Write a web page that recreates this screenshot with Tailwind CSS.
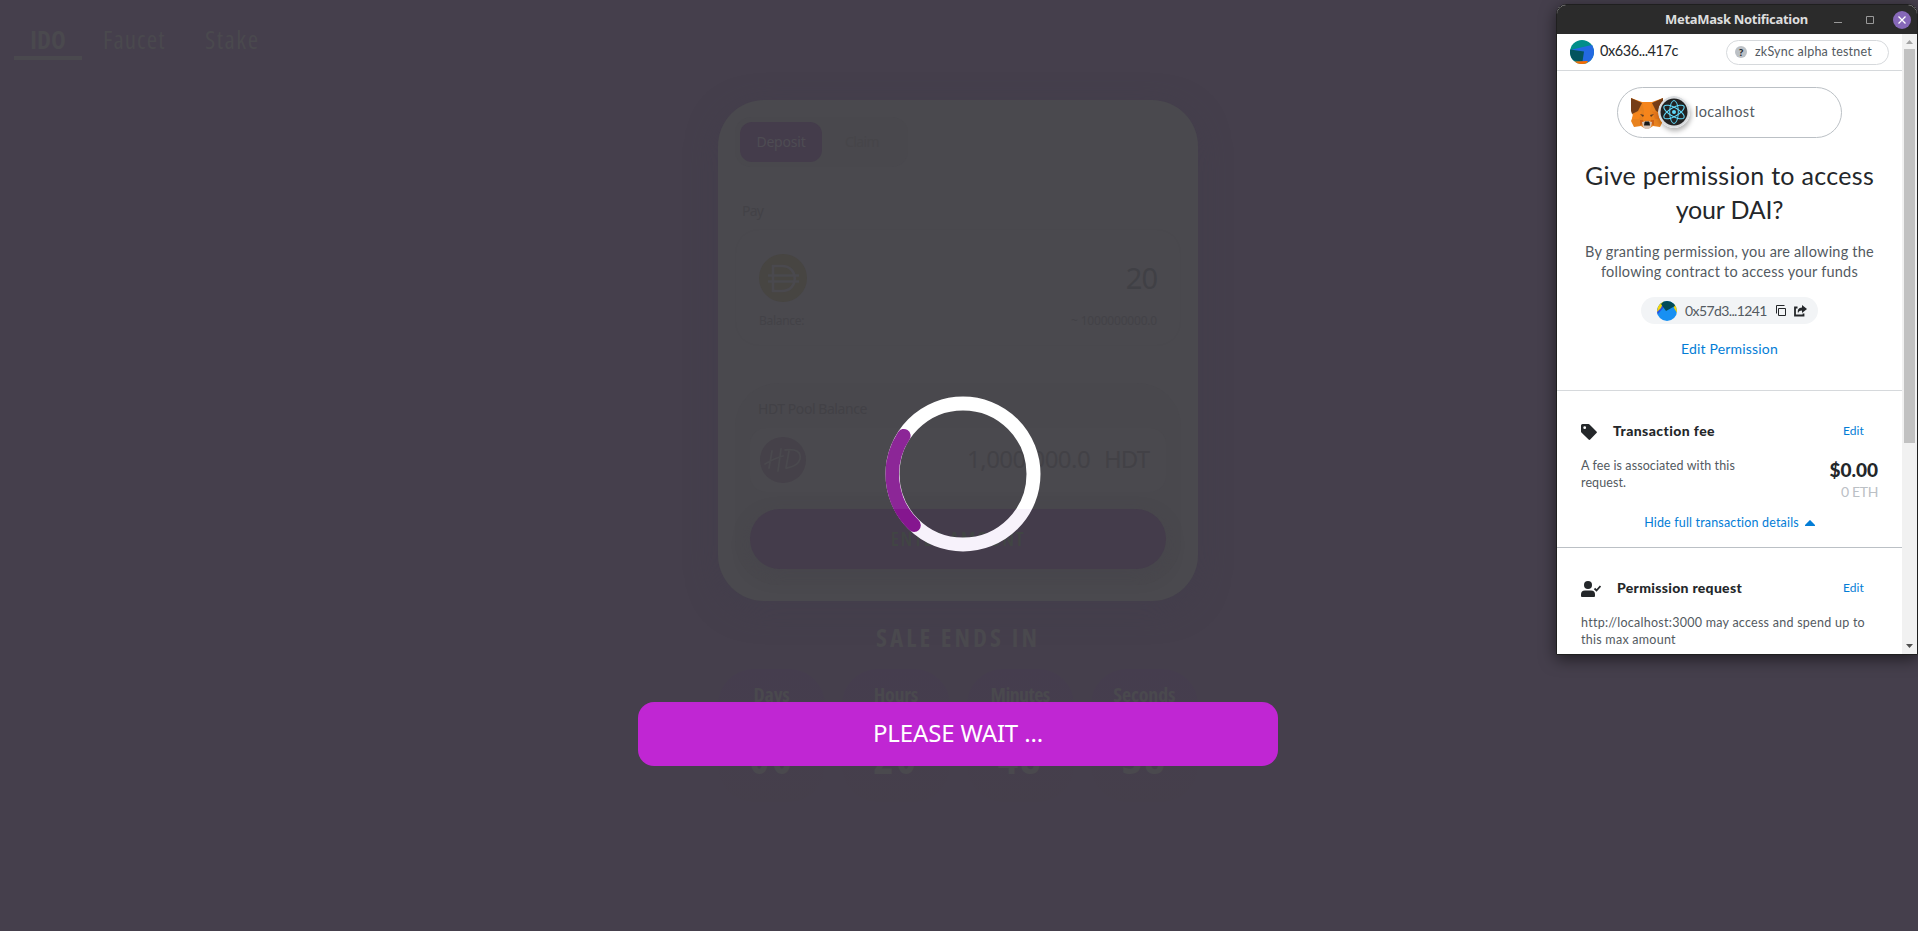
<!DOCTYPE html>
<html lang="en">
<head>
<meta charset="utf-8">
<title>IDO</title>
<script src="https://cdn.jsdelivr.net/npm/@tailwindcss/browser@4"></script>
</head>
<body class="bg-[#453f4c] font-['Noto_Sans',sans-serif]">
<div class="relative h-[931px] w-[1918px] overflow-hidden bg-[#453f4c] text-[#414046]">

  <nav class="flex h-[100px] pl-[14px] pt-[22px] font-['Open_Sans',sans-serif] text-[25px] font-medium font-stretch-condensed leading-[34px] text-[#4a494e]">
    <div class="h-[38px] w-[68px] border-b-4 border-[#4a494e] text-center font-bold">IDO</div>
    <div class="ml-[21px] w-[102px] tracking-[1.05px]">Faucet</div>
    <div class="tracking-[1.5px]">Stake</div>
  </nav>

  <main class="flex flex-col items-center pr-[2px]">
    <section class="h-[501px] w-[480px] rounded-[46px] bg-[#4a494e] shadow-[0_8px_30px_rgba(66,62,76,0.5)]">
      <div class="ml-[17px] mt-[17px] flex h-[50px] w-[173px] items-center rounded-2xl bg-[#49484d] pl-[5px]">
        <div class="flex h-10 w-[82px] items-center justify-center rounded-xl bg-[#443c4b] text-sm tracking-[-.2px] text-[#4e4c53]">Deposit</div>
        <div class="flex w-[80px] justify-center text-sm tracking-[-.6px] text-[#464549]">Claim</div>
      </div>
      <div class="ml-6 mt-8 h-6 text-sm leading-6 tracking-[-.8px] text-[#434247]">Pay</div>
      <div class="mx-[17px] mt-[6px] h-[117px] rounded-3xl border border-[#49484d] px-[23px] pt-[24px]">
        <div class="flex items-center justify-between">
          <svg class="size-12" viewBox="0 0 48 48" fill="none" stroke="#4a494e" stroke-width="2.6"><circle cx="24" cy="24" r="24" fill="#474542" stroke="none"/><path d="M14 12h9c17 0 17 25 0 25h-9zM9 21.500h31M9 27.500h31"/></svg>
          <span class="text-[29px] tracking-[-1px] text-[#404045]">20</span>
        </div>
        <div class="mt-[9px] flex justify-between text-xs leading-5 text-[#434247]"><span class="tracking-[-.3px]">Balance:</span><span class="tracking-[-.2px]">~ 1000000000.0</span></div>
      </div>
      <div class="mx-[17px] mt-[37px] h-[202px] rounded-[44px] bg-[#49484d] pt-[14px]">
        <div class="ml-[23px] h-6 text-sm leading-6 tracking-[-.44px] text-[#424146]">HDT Pool Balance</div>
        <div class="mx-[15px] mt-[7px] flex h-[64px] items-center justify-between rounded-2xl bg-[#4a494e] pl-[10px] pr-[17px] text-[#424146]">
          <svg class="size-[46px]" viewBox="0 0 46 46"><circle cx="23" cy="23" r="23" fill="#454149"/><path d="M12 14 9 31M21 12l-3 22M5 27q10-6 18-8M29 14l-3 17M25 13q17-2 15 9-2 7-13 9" fill="none" stroke="#4a494e" stroke-width="1.800" stroke-linecap="round"/></svg>
          <div class="flex gap-[14px] pb-[2px] text-2xl"><span class="tracking-[-.56px]">1,000,000.0</span><span class="tracking-[-1px]">HDT</span></div>
        </div>
        <div class="mx-[15px] mt-[17px] flex h-[60px] items-center justify-center rounded-full bg-[#443c4b] font-['Open_Sans',sans-serif] text-[20px] font-semibold font-stretch-condensed tracking-[1.5px] text-[#414544] shadow-[0_6px_16px_rgba(69,67,75,0.5)]">ENTER AMOUNT</div>
      </div>
    </section>

    <section class="w-[480px] font-['Open_Sans',sans-serif] font-bold font-stretch-condensed text-[#4a494e]">
      <h2 class="mt-5 text-center text-[25px] leading-8 tracking-[3.07px]">SALE ENDS IN</h2>
      <div class="mt-4 grid grid-cols-4 gap-[17px] text-center">
        <div class="h-[133px] rounded-[36px] bg-linear-to-b from-[#453d4e] to-[#453f4b] pt-3"><div class="text-xl leading-7 tracking-[-.2px]">Days</div><div class="mt-7 text-[44px] leading-10 tracking-[2px]">00</div></div>
        <div class="h-[133px] rounded-[36px] bg-linear-to-b from-[#453d4e] to-[#453f4b] pt-3"><div class="text-xl leading-7 tracking-[-.35px]">Hours</div><div class="mt-7 text-[44px] leading-10 tracking-[2px]">20</div></div>
        <div class="h-[133px] rounded-[36px] bg-linear-to-b from-[#453d4e] to-[#453f4b] pt-3"><div class="text-xl leading-7 tracking-[-.6px]">Minutes</div><div class="mt-7 text-[44px] leading-10 tracking-[2px]">48</div></div>
        <div class="h-[133px] rounded-[36px] bg-linear-to-b from-[#453d4e] to-[#453f4b] pt-3"><div class="text-xl leading-7 tracking-[-.15px]">Seconds</div><div class="mt-7 text-[44px] leading-10 tracking-[2px]">38</div></div>
      </div>
    </section>
  </main>

  <!-- Loading spinner -->
  <svg class="absolute left-[885px] top-[396px] size-[156px]" viewBox="885 396 156 156" fill="none">
    <defs>
      <linearGradient id="ring" gradientUnits="userSpaceOnUse" x1="0" y1="396" x2="0" y2="552"><stop offset=".724" stop-color="#fff"/><stop offset=".724" stop-color="#f7f2fb"/></linearGradient>
      <linearGradient id="arc" gradientUnits="userSpaceOnUse" x1="0" y1="396" x2="0" y2="552"><stop offset=".724" stop-color="#8c2697"/><stop offset=".724" stop-color="#85168f"/></linearGradient>
    </defs>
    <circle cx="963" cy="474" r="70.500" stroke="url(#ring)" stroke-width="14"/>
    <path d="M903.800 435.700A70.500 70.500 0 0 0 914 525.200" stroke="url(#arc)" stroke-width="13.600" stroke-linecap="round"/>
  </svg>

  <!-- Toast -->
  <div class="absolute left-[638px] top-[702px] flex h-16 w-[640px] items-center justify-center rounded-2xl bg-[#c026d3] pb-[2px] text-2xl tracking-[-.15px] text-white">PLEASE WAIT ...</div>

  <!-- Wallet window -->
  <div class="absolute left-[1556px] top-[4px] flex h-[651px] w-[362px] flex-col overflow-hidden rounded-t-[10px] border border-[#1f1f1f] bg-white font-['Lato',sans-serif] text-[#535a61] shadow-[0_4px_16px_rgba(0,0,0,0.55)]">
    <div class="flex h-[29px] shrink-0 items-center bg-[#2b2b2b] pl-[108px] font-['Noto_Sans',sans-serif] text-[13px] font-bold tracking-[-.3px] text-[#dedede]">
      <div class="w-[169px]">MetaMask Notification</div>
      <svg class="h-[20px] w-[80px]" viewBox="0 0 80 20" fill="none"><path d="M0 12.500h8" stroke="#999"/><path d="M32.500 6.500h7v7h-7z" stroke="#999"/><circle cx="68" cy="10" r="9" fill="#8668b8"/><path d="m64.500 6.500 7 7m0-7-7 7" stroke="#fff" stroke-width="1.300"/></svg>
    </div>
    <div class="flex min-h-0 flex-1">
      <div class="w-[345px] shrink-0 overflow-hidden">
        <header class="flex h-[37px] items-center border-b border-[#d6d9dc] pl-[13px]">
          <svg class="size-6" viewBox="0 0 24 24"><clipPath id="c1"><circle cx="12" cy="12" r="12"/></clipPath><g clip-path="url(#c1)"><path fill="#018e8a" d="M0 0h24v24H0z"/><path fill="#2369e2" d="m2 9.500 22-5V22H10z"/><path fill="#03545e" d="m0 9.500 14 2-1.500 10L0 20z"/><path fill="#f96c01" d="M4 21.500 18 21l-2 3H4z"/></g></svg>
          <div class="ml-[6px] w-[126px] pb-[2px] text-[14.5px] tracking-[-.44px] text-[#24272a]">0x636...417c</div>
          <div class="flex h-[25px] w-[163px] items-center rounded-full border border-[#d6d9dc] pl-2 text-[12.5px]">
            <div class="mr-2 flex size-3 items-center justify-center rounded-full bg-[#bbc0c5] text-[10px] font-black text-[#24272a]">?</div><span class="tracking-[.22px]">zkSync alpha testnet</span>
          </div>
        </header>
        <div class="mx-auto mt-4 flex h-[51px] w-[225px] items-center rounded-full border border-[#bbc0c5] pl-[13px] text-[14.5px]">
          <svg class="h-[32px] w-[32px]" viewBox="0 0 32 32"><path fill="#e8821e" d="M0 1 11 5h10l11-4-1 14-1 4 2 5-3 6-7-1-3 2h-6l-3-2-7 1-3-6 2-5-1-4z"/><path fill="#763d16" d="m0 1 11 5-4 8-6 3-1-3zM32 1 21 6l4 8 6 3 1-3z"/><path fill="#f6851b" d="M11 5h10l-2 9 1 9h-8l1-9zM2 17l9-3-3 8H1z"/><path fill="#e4761b" d="m30 17-9-3 3 8h7z"/><path fill="#cd6116" d="m9 23 3 0 1 4-4 1zM23 23l-3 0-1 4 4 1z"/><path fill="#5c3a20" d="m9 17 4 1-1 2zM23 17l-4 1 1 2z"/><path fill="#d7c1b3" d="m11 25 5-1 5 1-1 5-2 2h-4l-2-2z"/><path fill="#161616" d="m13.500 25.500.7-1h3.600l.7 1 .5 3h-6z"/></svg>
          <svg class="-ml-[5px] mb-[2px] size-8 rounded-full shadow-[1px_3px_5px_rgba(0,0,0,0.3)]" viewBox="-16 -16 32 32" fill="none" stroke="#61dafb" stroke-width="1"><circle r="16" fill="#d9dcdf" stroke="none"/><circle r="13.500" fill="#222" stroke="none"/><circle r="2" fill="#61dafb" stroke="none"/><ellipse rx="4.300" ry="11.500"/><ellipse rx="4.300" ry="11.500" transform="rotate(60)"/><ellipse rx="4.300" ry="11.500" transform="rotate(120)"/></svg>
          <span class="ml-[5px] pb-[2px] tracking-[.33px]">localhost</span>
        </div>
        <h1 class="mt-5 text-center text-[25px] leading-[34px] text-[#24272a]"><span class="tracking-[.3px]">Give permission to access</span><br><span class="tracking-[-.2px]">your DAI?</span></h1>
        <p class="mt-4 text-center text-[14.5px] leading-5"><span class="tracking-[.21px]">By granting permission, you are allowing the</span><br><span class="tracking-[.23px]">following contract to access your funds</span></p>
        <div class="mx-auto mt-[15px] flex h-[27px] w-[177px] items-center rounded-full bg-[#f2f4f6] pl-4 text-sm">
          <svg class="size-5" viewBox="0 0 20 20"><clipPath id="c2"><circle cx="10" cy="10" r="10"/></clipPath><g clip-path="url(#c2)"><path fill="#1890f2" d="M0 0h20v20H0z"/><path fill="#2a4fe0" d="m0 14 8-9L4 2 0 8z"/><path fill="#f5d60a" d="M0 0h7L4 7l-4 4zM16 3l4 1v8l-3-5z"/><path fill="#034b57" d="m4 3 4-4 9 1 1 5-9 5z"/></g></svg>
          <div class="ml-2 w-[91px] whitespace-nowrap tracking-[-.6px]">0x57d3...1241</div>
          <svg class="h-[12px] w-[31px]" viewBox="0 0 31 12" fill="none" stroke="#24272a"><path d="M2.500 3.500h7v7h-7zM.5 8.500v-8h8"/><path d="M21.500 2.500H19v8h8.500V8.500" stroke-width="1.800"/><path d="M26 0l5 4-5 4V5.500q-3.500 0-4 3-1.500-5.500 4-6z" fill="#24272a" stroke="none"/></svg>
        </div>
        <div class="mt-[15px] text-center text-sm leading-5 tracking-[.18px] text-[#037dd6]">Edit Permission</div>
        <section class="mt-[31px] h-[157px] border-t border-[#d6d9dc] px-6 pt-[31px]">
          <div class="flex h-5 items-center">
            <svg class="size-4" viewBox="0 0 16 16"><path fill="#24272a" fill-rule="evenodd" d="M1.500 0h6q.6 0 1 .4l7 7q.8.8 0 1.600l-6.300 6.500q-.8.8-1.600 0l-7.200-7Q0 8 0 7.300V1.500Q0 0 1.500 0zM3.700 2.300a1.400 1.400 0 1 0 0 2.800 1.400 1.400 0 0 0 0-2.800z"/></svg>
            <div class="ml-4 flex-1 pb-[2px] text-sm font-black tracking-[.42px] text-[#24272a]">Transaction fee</div>
            <span class="mr-[14px] pb-[2px] text-xs tracking-[.1px] text-[#037dd6]">Edit</span>
          </div>
          <div class="mt-[15px] flex h-[56px] justify-between">
            <p class="text-[12.5px] leading-[17px] tracking-[.1px]">A fee is associated with this<br>request.</p>
            <div class="text-right"><div class="pt-[2px] text-[19px] font-black leading-[22px] text-[#24272a]">$0.00</div><div class="pt-px text-sm leading-5 tracking-[-.35px] text-[#bbc0c5]">0 ETH</div></div>
          </div>
          <div class="flex items-center justify-center gap-[6px] text-[12.5px] leading-5 tracking-[.17px] text-[#037dd6]">Hide full transaction details<svg class="h-[6px] w-[10px]" viewBox="0 0 10 6"><path fill="#037dd6" d="M4.400.4q.6-.6 1.200 0L10 5v1H0V5z"/></svg></div>
        </section>
        <section class="h-[157px] border-t border-[#bbc0c5] px-6 pt-[31px]">
          <div class="flex h-5 items-center">
            <svg class="h-4 w-5" viewBox="0 0 20 16" fill="#24272a"><circle cx="7" cy="4" r="4"/><path d="M4 9.500h6q4 0 4 4V15q0 1-1 1H1q-1 0-1-1v-1.500q0-4 4-4z"/><path d="m13.500 7.500 2 2L19.500 5" fill="none" stroke="#24272a" stroke-width="1.800"/></svg>
            <div class="ml-4 flex-1 pb-[2px] text-sm font-black tracking-[.3px] text-[#24272a]">Permission request</div>
            <span class="mr-[14px] pb-[2px] text-xs tracking-[.1px] text-[#037dd6]">Edit</span>
          </div>
          <p class="mt-[15px] text-[12.5px] leading-[17px] tracking-[.26px]">http://localhost:3000 may access and spend up to<br>this max amount</p>
        </section>
      </div>
      <div class="flex w-[15px] shrink-0 flex-col items-center bg-[#f1f1f1]">
        <svg class="h-[15px] w-[15px] shrink-0" viewBox="0 0 15 15"><path fill="#a3a3a3" d="M4 10h7L7.500 6z"/></svg>
        <div class="h-[394px] w-[11px] bg-[#c1c1c1]"></div>
        <svg class="mt-auto h-[15px] w-[15px] shrink-0" viewBox="0 0 15 15"><path fill="#505050" d="M4 5h7L7.500 9z"/></svg>
      </div>
    </div>
  </div>
</div>
</body>
</html>
